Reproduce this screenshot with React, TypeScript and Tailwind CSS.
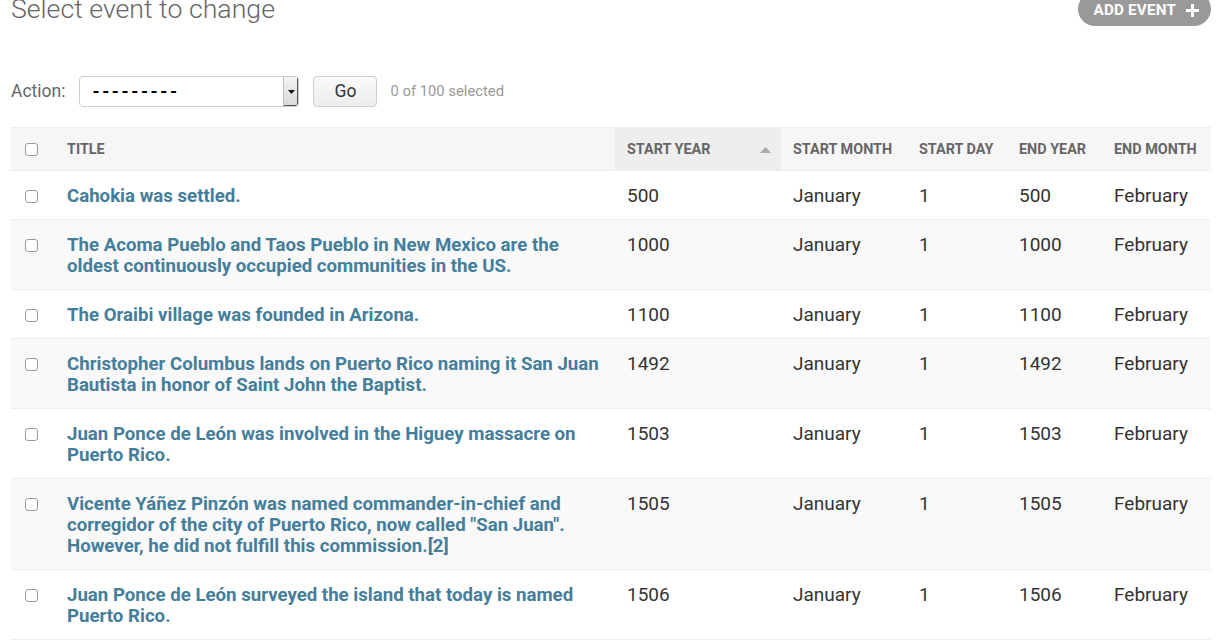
import React from "react";

/* ── Change list rows ── */
const events = [
  { id: 1, title: "Cahokia was settled.", year: "500" },
  {
    id: 2,
    title:
      "The Acoma Pueblo and Taos Pueblo in New Mexico are the oldest continuously occupied communities in the US.",
    year: "1000",
  },
  { id: 3, title: "The Oraibi village was founded in Arizona.", year: "1100" },
  {
    id: 4,
    title:
      "Christopher Columbus lands on Puerto Rico naming it San Juan Bautista in honor of Saint John the Baptist.",
    year: "1492",
  },
  {
    id: 5,
    title: "Juan Ponce de León was involved in the Higuey massacre on Puerto Rico.",
    year: "1503",
  },
  {
    id: 6,
    title:
      'Vicente Yáñez Pinzón was named commander-in-chief and corregidor of the city of Puerto Rico, now called "San Juan". However, he did not fulfill this commission.[2]',
    year: "1505",
  },
  {
    id: 7,
    title: "Juan Ponce de León surveyed the island that today is named Puerto Rico.",
    year: "1506",
  },
];

const columns = [
  { label: "START MONTH", width: "w-[126px]" },
  { label: "START DAY", width: "w-[100px]" },
  { label: "END YEAR", width: "w-[95px]" },
  { label: "END MONTH", width: "w-[109px]" },
];

function Checkbox() {
  return (
    <span className="block w-[13px] h-[13px] rounded-[3px] border border-[#9a9a9a] bg-white" />
  );
}

export default function App() {
  return (
    <div
      className="min-h-screen bg-white text-[#333] overflow-hidden"
      style={{ fontFamily: "Roboto, 'Liberation Sans', sans-serif" }}
    >
      <div className="ml-[11px] w-[1200px]">
        {/* ── Heading + add button ── */}
        <div className="flex items-start justify-between -mt-[8px] h-[34px]">
          <h1 className="text-[26.7px] leading-[34px] font-light text-[#666]">
            Select event to change
          </h1>
          <a className="flex items-center gap-[10px] h-[34px] pl-[16px] pr-[12px] pt-[3px] rounded-full bg-[#999] text-white text-[15.2px] font-bold tracking-[0.2px]">
            ADD EVENT
            <svg width="13" height="13" viewBox="0 0 13 13">
              <path d="M5 0h3v5h5v3H8v5H5V8H0V5h5z" fill="white" />
            </svg>
          </a>
        </div>

        {/* ── Actions bar ── */}
        <div className="flex items-center mt-[50px] h-[31px]">
          <span className="text-[17.5px] text-[#666]">Action:</span>
          <div className="ml-[14px] flex w-[220px] h-[31px] rounded-[4px] border border-[#ccc] bg-white overflow-hidden">
            <span className="flex-1 pl-[12px] text-[18px] leading-[30px] font-bold text-black tracking-[2.6px]">
              ---------
            </span>
            <span className="w-[15px] flex items-center justify-center bg-gradient-to-b from-[#f4f4f4] to-[#d8d8d8] border-l border-[#bbb] shadow-[inset_-1px_-1px_0_#555]">
              <svg width="7" height="4" viewBox="0 0 7 4">
                <path d="M0 0h7L3.5 4z" fill="#111" />
              </svg>
            </span>
          </div>
          <button className="ml-[14px] w-[64px] h-[31px] rounded-[4px] border border-[#ccc] bg-gradient-to-b from-[#fafafa] to-[#ececec] text-[17.5px] text-[#333]">
            Go
          </button>
          <span className="ml-[13px] text-[14.8px] text-[#999]">0 of 100 selected</span>
        </div>

        {/* ── Results table ── */}
        <table className="mt-[20px] w-[1200px] table-fixed border-collapse">
          <thead>
            <tr className="bg-[#f6f6f6] border-t border-b border-[#eee] h-[43px]">
              <th className="w-[44px] pl-[14px] text-left">
                <Checkbox />
              </th>
              <th className="w-[560px] pl-[12px] pt-[2px] text-left text-[14.4px] font-bold text-[#666]">
                TITLE
              </th>
              <th className="w-[166px] bg-[#eee] pl-[12px] pr-[10px] pt-[2px] text-left text-[14.4px] font-bold text-[#666]">
                <div className="flex items-center justify-between">
                  START YEAR
                  <svg width="11" height="6" viewBox="0 0 11 6">
                    <path d="M0 6L5.5 0L11 6z" fill="#aaa" />
                  </svg>
                </div>
              </th>
              {columns.map((c) => (
                <th
                  key={c.label}
                  className={`${c.width} pl-[12px] pt-[2px] text-left text-[14.4px] font-bold text-[#666] whitespace-nowrap`}
                >
                  {c.label}
                </th>
              ))}
            </tr>
          </thead>
          <tbody>
            {events.map((ev, i) => (
              <tr
                key={ev.id}
                className={`${i % 2 === 1 ? "bg-[#f9f9f9]" : "bg-white"} border-b border-[#eee] align-top text-[19px] leading-[21px]`}
              >
                <td className="pl-[14px] pt-[19px]">
                  <Checkbox />
                </td>
                <th className="pl-[12px] pr-[10px] pt-[15px] pb-[12px] text-left text-[18.65px] font-bold text-[#447e9b]">
                  {ev.title}
                </th>
                <td className="pl-[12px] pt-[14px]">{ev.year}</td>
                <td className="pl-[12px] pt-[14px]">January</td>
                <td className="pl-[12px] pt-[14px]">1</td>
                <td className="pl-[12px] pt-[14px]">{ev.year}</td>
                <td className="pl-[12px] pt-[14px]">February</td>
              </tr>
            ))}
          </tbody>
        </table>
      </div>
    </div>
  );
}
